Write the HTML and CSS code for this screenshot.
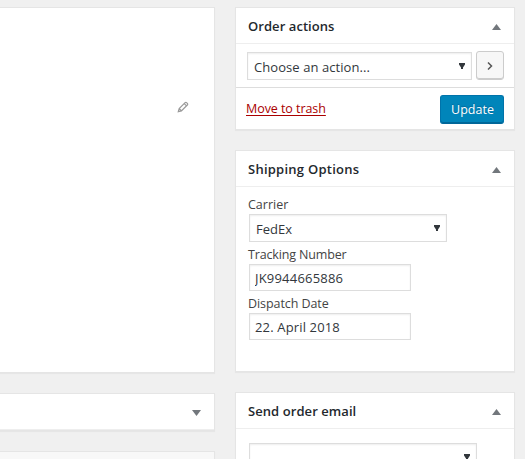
FILE: index.html
```
<!DOCTYPE html>
<html lang="en">
<head>
<meta charset="utf-8">
<title>Edit order</title>
<link rel="stylesheet" href="styles.css">
</head>
<body>
<div class="layout">
  <main class="column main">
    <section class="box order-data">
      <svg class="pencil" viewBox="0 0 12 12" width="12" height="12"><path d="M1.3 10.7 2.2 7.6 8.1 1.7Q8.9 1 9.8 1.9L10.3 2.4Q11.1 3.2 10.3 4L4.4 9.9ZM2.3 7.7 4.3 9.7M7.3 2.6 9.5 4.8"/></svg>
    </section>
    <section class="box closed">
      <svg class="toggle" viewBox="0 0 9 6" width="9" height="6"><path d="M0 0H9L4.5 6Z"/></svg>
    </section>
    <section class="box items"></section>
  </main>
  <aside class="column side">
    <section class="box actions">
      <header class="head"><h2 class="t-actions">Order actions</h2><svg class="toggle" viewBox="0 0 9 6" width="9" height="6"><path d="M0 6H9L4.5 0Z"/></svg></header>
      <div class="action-row">
        <div class="field select action-select"><span class="t-choose">Choose an action...</span><svg class="caret" viewBox="0 0 6 6" width="6" height="6"><path d="M0 0H6V1.5L4 4.5V6H2V4.5L0 1.5Z"/></svg></div>
        <button class="go" aria-label="Apply"><svg viewBox="0 0 6 8" width="6" height="8"><path d="M1 .5 4.5 4 1 7.5"/></svg></button>
      </div>
      <div class="submit-row"><a class="trash" href="#">Move to trash</a><button class="update">Update</button></div>
    </section>
    <section class="box shipping">
      <header class="head"><h2 class="t-shipping">Shipping Options</h2><svg class="toggle" viewBox="0 0 9 6" width="9" height="6"><path d="M0 6H9L4.5 0Z"/></svg></header>
      <div class="fields">
        <label>Carrier</label>
        <div class="field select carrier"><span>FedEx</span><svg class="caret" viewBox="0 0 6 6" width="6" height="6"><path d="M0 0H6V1.5L4 4.5V6H2V4.5L0 1.5Z"/></svg></div>
        <label class="t-tracking">Tracking Number</label>
        <input class="field text t-number" value="JK9944665886">
        <label class="t-dispatch">Dispatch Date</label>
        <input class="field text t-date" value="22. April 2018">
      </div>
    </section>
    <section class="box email">
      <header class="head"><h2 class="t-email">Send order email</h2><svg class="toggle" viewBox="0 0 9 6" width="9" height="6"><path d="M0 6H9L4.5 0Z"/></svg></header>
      <div class="field select email-select"><svg class="caret" viewBox="0 0 6 6" width="6" height="6"><path d="M0 0H6V1.5L4 4.5V6H2V4.5L0 1.5Z"/></svg></div>
    </section>
  </aside>
</div>
</body>
</html>
```
FILE: styles.css
```
* { box-sizing: border-box; }
html, body { margin: 0; height: 100%; overflow: hidden; }
body { background: #f0f0f0; color: #444; font: 12.5px/18px "Open Sans", "Noto Sans", sans-serif; }
.layout { display: flex; height: 459px; padding-top: 7px; overflow: hidden; }
.column { display: flex; flex-direction: column; gap: 20px; flex-shrink: 0; }
.main { width: 215px; }
.side { width: 280px; margin-left: 20px; }
.box { flex-shrink: 0; background: #fff; border: 1px solid #e5e5e5; box-shadow: 0 1px 1px rgba(0,0,0,.04); }
.main .box { border-left: 0; }
.order-data { height: 366px; padding: 93px 25px 0 0; display: flex; justify-content: flex-end; align-items: flex-start; }
.pencil { fill: none; stroke: #999; stroke-width: 1.2; }
.closed { height: 38px; display: flex; justify-content: flex-end; align-items: center; padding: 2px 13px 0 0; box-shadow: inset 0 -1px #eee, 0 1px 1px rgba(0,0,0,.04); }
.items { height: 60px; background: #f8f8f8; }
.toggle { fill: #72777c; display: block; }
.head { display: flex; align-items: center; justify-content: space-between; height: 36px; padding: 1px 13px 0 12px; border-bottom: 1px solid #eee; }
.head .toggle { margin-top: 2px; }
h2 { margin: 0; font-size: 13px; line-height: 18px; font-weight: 600; color: #23282d; white-space: nowrap; }
.t-actions { letter-spacing: .06px; }
.t-shipping { letter-spacing: .25px; }
.t-email { letter-spacing: .07px; }
.actions { height: 123px; }
.action-row { display: flex; height: 44px; padding: 7px 10px 0 11px; justify-content: space-between; border-bottom: 1px solid #ddd; }
.field { display: block; border: 1px solid #ddd; background: #fff; color: #32373c; box-shadow: inset 0 1px 2px rgba(0,0,0,.07); font: 13px/18px "Open Sans", "Noto Sans", sans-serif; outline: 0; }
.select { display: flex; align-items: center; height: 28px; padding: 1px 6px 0; white-space: nowrap; }
.caret { fill: #32373c; margin-left: auto; margin-top: -1px; }
.action-select { width: 225px; margin-top: 1px; }
.t-choose { letter-spacing: .07px; }
.go { display: flex; align-items: center; justify-content: center; width: 28px; height: 29px; padding: 0; border: 1px solid #ccc; border-radius: 3px; background: #f7f7f7; box-shadow: inset 0 -1px #ccc; }
.go svg { fill: none; stroke: #555; stroke-width: 1.5; }
.submit-row { display: flex; align-items: flex-start; justify-content: space-between; padding: 7px 10px 0; }
.trash { color: #a00; margin-top: 5px; text-decoration: underline; text-underline-offset: 2px; letter-spacing: -.06px; }
.update { width: 64px; height: 29px; padding: 1px 0 1px 1px; border: 1px solid #0073aa; border-bottom-color: #006799; border-radius: 3px; background: #0085ba; box-shadow: inset 0 -1px #006799; color: #fff; font: 12.5px/18px "Open Sans", "Noto Sans", sans-serif; text-shadow: 0 -1px 1px #006799; }
.shipping { height: 222px; }
.fields { padding: 9px 12px 0; }
label { display: block; width: max-content; height: 18px; white-space: nowrap; }
.carrier { width: 198px; margin: 0 0 4px 1px; }
.text { width: 162px; height: 27px; padding: 1px 5px 0; margin: 0 0 4px 1px; }
.t-tracking { letter-spacing: -.15px; }
.t-dispatch { letter-spacing: -.08px; }
.t-number { letter-spacing: .2px; }
.t-date { letter-spacing: .15px; }
.email { height: 120px; }
.email-select { width: 228px; margin: 14px 0 0 13px; }
```
